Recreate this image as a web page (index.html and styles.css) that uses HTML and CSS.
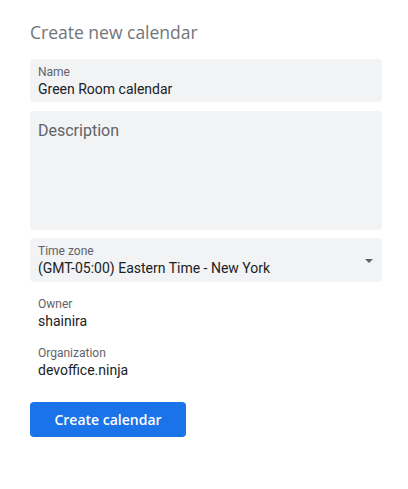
FILE: index.html
```html
<!DOCTYPE html>
<html>
<head>
<meta charset="utf-8">
<link rel="stylesheet" href="styles.css">
</head>
<body>
<div class="page">
  <h1 class="title">Create new calendar</h1>
  <div class="field">
    <div class="label">Name</div>
    <div class="value">Green Room calendar</div>
  </div>
  <div class="field area">
    <div class="placeholder">Description</div>
  </div>
  <div class="field select">
    <div class="select-text">
      <div class="label">Time zone</div>
      <div class="value">(GMT-05:00) Eastern Time - New York</div>
    </div>
    <span class="arrow"></span>
  </div>
  <div class="info">
    <div class="label">Owner</div>
    <div class="value">shainira</div>
  </div>
  <div class="info">
    <div class="label">Organization</div>
    <div class="value">devoffice.ninja</div>
  </div>
  <button class="btn">Create calendar</button>
</div>
</body>
</html>
```
FILE: styles.css
```css
* { box-sizing: border-box; }
html, body { margin: 0; padding: 0; background: #fff; }
body { font-family: Roboto, "Liberation Sans", Arial, sans-serif; }
.page {
  width: 352px;
  margin-left: 30px;
  padding-top: 20px;
  display: flex;
  flex-direction: column;
}
.title {
  margin: 0 0 15px 0;
  font-family: "Open Sans", Roboto, sans-serif;
  font-weight: 400;
  font-size: 17.5px;
  line-height: 24px;
  color: #70757a;
}
.field {
  background: #f1f3f4;
  border-radius: 4px;
  padding: 7px 8px 3px 8px;
  margin-bottom: 9px;
}
.label {
  font-size: 12px;
  line-height: 13px;
  color: #5f6368;
}
.value {
  font-size: 14px;
  line-height: 20px;
  color: #202124;
}
.area {
  height: 119px;
  padding-top: 8px;
}
.placeholder {
  font-size: 16px;
  line-height: 24px;
  color: #5f6368;
}
.select {
  margin-top: -1px;
  display: flex;
  align-items: center;
  padding-bottom: 4px;
  padding-right: 9px;
}
.select-text { flex: 1; }
.arrow {
  width: 0;
  height: 0;
  border-left: 4px solid transparent;
  border-right: 4px solid transparent;
  border-top: 4px solid #5f6368;
  margin-top: -2px;
}
.info {
  padding-left: 8px;
  margin-top: 7px;
  margin-bottom: 10px;
}
.info + .info { margin-top: 6px; }
.btn {
  margin-top: 12px;
  width: 156px;
  height: 35px;
  border: none;
  border-radius: 4px;
  background: #1a73e8;
  color: #fff;
  font-family: "Open Sans", Roboto, sans-serif;
  font-weight: 600;
  font-size: 14px;
  padding: 0;
}
```
